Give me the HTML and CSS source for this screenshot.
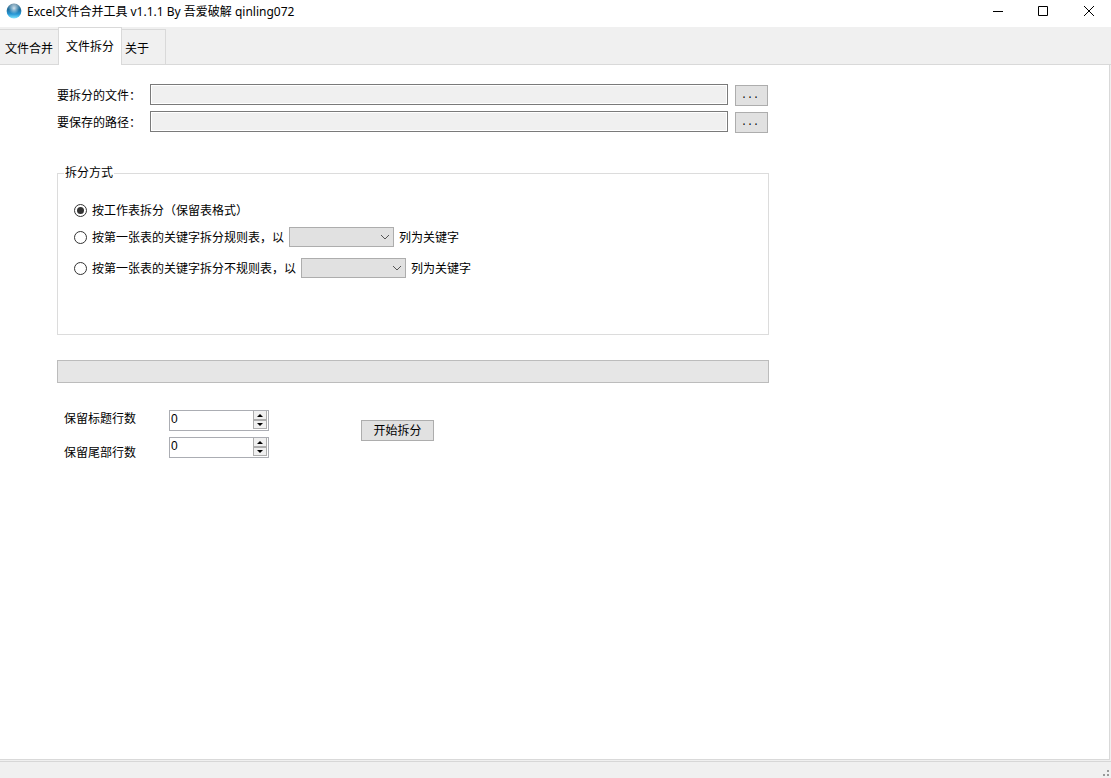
FILE: index.html
```html
<!DOCTYPE html>
<html lang="zh-CN">
<head>
    <meta charset="UTF-8">
    <meta name="viewport" content="width=device-width, initial-scale=1.0">
    <title>Excel文件合并工具</title>
    <link rel="stylesheet" href="styles.css">
</head>
<body>
    <header class="titlebar">
        <svg class="app-icon" width="16" height="16" viewBox="0 0 16 16">
            <defs>
                <linearGradient id="ball" x1="0" y1="0" x2="0" y2="1">
                    <stop offset="0" stop-color="#6f8fa3"/>
                    <stop offset="0.4" stop-color="#1f6f9f"/>
                    <stop offset="0.7" stop-color="#2596d4"/>
                    <stop offset="1" stop-color="#7fe6ff"/>
                </linearGradient>
                <radialGradient id="shine" cx="0.5" cy="0.4" r="0.5">
                    <stop offset="0" stop-color="#fff" stop-opacity="0.8"/>
                    <stop offset="1" stop-color="#cdeeff" stop-opacity="0"/>
                </radialGradient>
            </defs>
            <circle cx="8" cy="8" r="7.4" fill="url(#ball)"/>
            <ellipse cx="8" cy="6.5" rx="5.5" ry="6" fill="url(#shine)"/>
        </svg>
        <h1>Excel文件合并工具 v1.1.1 By 吾爱破解 qinling072</h1>
        <div class="window-buttons">
            <button type="button" aria-label="最小化">
                <svg width="12" height="12" viewBox="0 0 12 12"><path d="M0 6.5h10"/></svg>
            </button>
            <button type="button" aria-label="最大化">
                <svg width="12" height="12" viewBox="0 0 12 12"><path d="M0.5 1.5h9v9h-9z"/></svg>
            </button>
            <button type="button" aria-label="关闭">
                <svg width="12" height="12" viewBox="0 0 12 12"><path d="M1 1l10 10M11 1L1 11"/></svg>
            </button>
        </div>
    </header>

    <nav class="tabs" role="tablist">
        <button type="button" class="tab" role="tab">文件合并</button>
        <button type="button" class="tab active" role="tab" aria-selected="true">文件拆分</button>
        <button type="button" class="tab last" role="tab">关于</button>
    </nav>

    <main class="panel">
        <form class="split-form">
            <div class="file-row">
                <label for="sourceFile">要拆分的文件：</label>
                <input type="text" id="sourceFile" readonly>
                <button type="button" class="btn browse" aria-label="选择文件">...</button>
            </div>
            <div class="file-row">
                <label for="savePath">要保存的路径：</label>
                <input type="text" id="savePath" readonly>
                <button type="button" class="btn browse" aria-label="选择路径">...</button>
            </div>

            <fieldset>
                <legend>拆分方式</legend>
                <div class="option">
                    <input type="radio" name="mode" id="bySheet" checked>
                    <label for="bySheet">按工作表拆分（保留表格式）</label>
                </div>
                <div class="option">
                    <input type="radio" name="mode" id="byRegular">
                    <label for="byRegular">按第一张表的关键字拆分规则表，以</label>
                    <span class="combo">
                        <select id="regularColumn" disabled></select>
                        <svg width="10" height="6" viewBox="0 0 10 6"><path d="M1 1l4 4 4-4"/></svg>
                    </span>
                    <label for="regularColumn">列为关键字</label>
                </div>
                <div class="option">
                    <input type="radio" name="mode" id="byIrregular">
                    <label for="byIrregular">按第一张表的关键字拆分不规则表，以</label>
                    <span class="combo">
                        <select id="irregularColumn" disabled></select>
                        <svg width="10" height="6" viewBox="0 0 10 6"><path d="M1 1l4 4 4-4"/></svg>
                    </span>
                    <label for="irregularColumn">列为关键字</label>
                </div>
            </fieldset>

            <progress max="100" value="0" aria-label="拆分进度"></progress>

            <div class="bottom">
                <div class="labels">
                    <label for="headRows">保留标题行数</label>
                    <label for="tailRows">保留尾部行数</label>
                </div>
                <div class="spins">
                    <div class="spin">
                        <input type="number" id="headRows" value="0" min="0">
                        <div class="arrows">
                            <button type="button" aria-label="增加"><svg width="6" height="3" viewBox="0 0 6 3"><path d="M0 3h6L3 0z"/></svg></button>
                            <button type="button" aria-label="减少"><svg width="6" height="3" viewBox="0 0 6 3"><path d="M0 0h6L3 3z"/></svg></button>
                        </div>
                    </div>
                    <div class="spin">
                        <input type="number" id="tailRows" value="0" min="0">
                        <div class="arrows">
                            <button type="button" aria-label="增加"><svg width="6" height="3" viewBox="0 0 6 3"><path d="M0 3h6L3 0z"/></svg></button>
                            <button type="button" aria-label="减少"><svg width="6" height="3" viewBox="0 0 6 3"><path d="M0 0h6L3 3z"/></svg></button>
                        </div>
                    </div>
                </div>
                <button type="submit" class="btn start">开始拆分</button>
            </div>
        </form>
    </main>

    <footer class="statusbar">
        <svg width="6" height="6" viewBox="0 0 6 6"><path d="M4 0h2v2h-2zM0 4h2v2h-2zM4 4h2v2h-2z"/></svg>
    </footer>
</body>
</html>
```
FILE: styles.css
```css
* {
    box-sizing: border-box;
}
body {
    margin: 0;
    height: 100vh;
    display: flex;
    flex-direction: column;
    background-color: #f0f0f0;
    color: #000;
    font-family: "Liberation Sans", "Noto Sans CJK SC", sans-serif;
    font-size: 12px;
    line-height: 16px;
}
button, input, select {
    margin: 0;
    font: inherit;
    color: inherit;
}

/* title bar */
.titlebar {
    display: flex;
    align-items: center;
    height: 27px;
    padding: 0 0 5px 6px;
    background-color: #fff;
}
.titlebar h1 {
    margin: 0 auto 0 5px;
    padding-top: 2px;
    font-family: "Noto Sans", "Noto Sans CJK SC", sans-serif;
    font-size: 12px;
    font-weight: normal;
}
.window-buttons {
    display: flex;
}
.window-buttons button {
    display: flex;
    align-items: center;
    justify-content: center;
    width: 45px;
    height: 22px;
    padding: 0;
    border: none;
    background: none;
}
.window-buttons path {
    fill: none;
    stroke: #000;
}

/* tabs */
.tabs {
    display: flex;
    align-items: flex-end;
    height: 38px;
    box-shadow: inset 0 -1px #d9d9d9;
}
.tab {
    height: 36px;
    padding: 3px 5px 0;
    border: 1px solid #d9d9d9;
    border-width: 1px 0;
    background-color: #f0f0f0;
    white-space: nowrap;
}
.tab.active {
    height: 38px;
    padding: 0 7px;
    border-width: 1px 1px 0;
    background-color: #fff;
}
.tab.last {
    width: 44px;
    padding: 3px 3px 0;
    border-right-width: 1px;
    text-align: left;
}

/* page */
.panel {
    flex: 1;
    margin-right: 1px;
    padding: 19px 0 0 57px;
    border: 1px solid #d9d9d9;
    border-width: 0 1px 1px 0;
    background-color: #fff;
}
.split-form {
    width: 712px;
    max-width: 100%;
}
.file-row {
    display: flex;
    align-items: flex-start;
    height: 22px;
    margin-bottom: 5px;
    padding-right: 1px;
}
.file-row label {
    width: 93px;
    padding-top: 4px;
}
.file-row input {
    flex: 1;
    min-width: 0;
    height: 21px;
    margin-right: 7px;
    border: 1px solid #7a7a7a;
    background-color: #f0f0f0;
    box-shadow: inset 0 0 0 1px #fff;
}
.btn {
    height: 21px;
    padding: 0;
    border: 1px solid #adadad;
    background-color: #e1e1e1;
    line-height: 18px;
}
.browse {
    align-self: flex-end;
    width: 33px;
    padding-right: 3px;
    font-family: "Liberation Mono", monospace;
    font-size: 10px;
}
fieldset {
    height: 170px;
    margin: 32px 0 25px;
    padding: 19px 16px 0;
    border: 1px solid #dcdcdc;
}
legend {
    margin-left: -10px;
    padding: 0 1px;
}
.option {
    display: flex;
    align-items: center;
    gap: 5px;
    height: 20px;
    margin-bottom: 11px;
}
.option:first-of-type {
    margin-bottom: 7px;
}
.option label {
    padding-top: 2px;
}
.option input {
    flex: none;
    display: flex;
    align-items: center;
    justify-content: center;
    width: 13px;
    height: 13px;
    appearance: none;
    border: 1px solid #333;
    border-radius: 50%;
    background-color: #fff;
}
.option input:checked::before {
    content: "";
    width: 7px;
    height: 7px;
    border-radius: 50%;
    background-color: #333;
}
.combo {
    display: grid;
    align-items: center;
    width: 105px;
}
.combo select, .combo svg {
    grid-area: 1 / 1;
}
.combo select {
    width: 100%;
    height: 20px;
    appearance: none;
    border: 1px solid #adadad;
    border-radius: 0;
    background-color: #e1e1e1;
    opacity: 1;
}
.combo svg {
    justify-self: end;
    margin-right: 4px;
    fill: none;
    stroke: #555;
    pointer-events: none;
}
progress {
    display: block;
    width: 100%;
    height: 23px;
    appearance: none;
    border: 1px solid #bcbcbc;
    background-color: #e6e6e6;
}
progress::-webkit-progress-bar {
    background-color: #e6e6e6;
}

/* row counts */
.bottom {
    display: flex;
    align-items: flex-start;
    margin-top: 27px;
    padding-left: 7px;
}
.labels {
    display: grid;
    gap: 18px;
    width: 105px;
    padding-top: 1px;
}
.spins {
    display: grid;
    gap: 6px;
}
.spin {
    display: flex;
    width: 100px;
    height: 21px;
    padding: 0 1px 1px;
    border: 1px solid #abadb3;
}
.spin input {
    flex: 1;
    min-width: 0;
    height: 16px;
    padding: 0;
    border: none;
    background: none;
    outline: none;
    appearance: textfield;
}
.arrows {
    display: grid;
    grid-template-rows: 9px 9px;
    width: 14px;
}
.arrows button {
    display: flex;
    align-items: center;
    justify-content: center;
    padding: 0;
    border: 1px solid #adadad;
    background-color: #f0f0f0;
}
.arrows button:first-child {
    border-top: none;
}
.start {
    width: 73px;
    margin: 10px 0 0 92px;
}

.statusbar {
    display: flex;
    align-items: flex-end;
    justify-content: flex-end;
    height: 17px;
    margin-top: 1px;
    padding: 0 2px 2px 0;
    border-top: 1px solid #d7d7d7;
}
.statusbar path {
    fill: #999;
}
```
